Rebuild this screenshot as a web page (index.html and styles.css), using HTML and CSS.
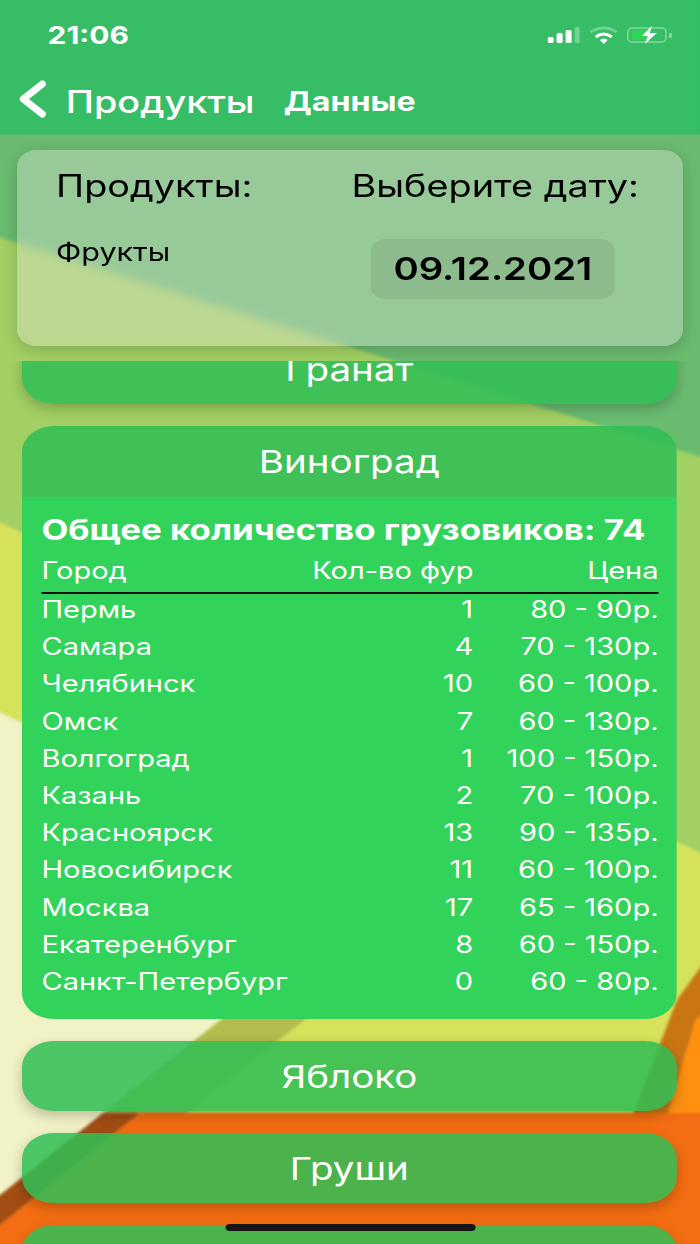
FILE: index.html
```html
<!DOCTYPE html>
<html lang="ru">
<head>
  <meta charset="UTF-8">
  <title>Данные</title>
  <link rel="stylesheet" href="styles.css">
</head>
<body>
  <svg class="wallpaper" viewBox="0 0 700 1244" width="700" height="1244" aria-hidden="true">
    <g class="wallpaper-shapes">
      <rect x="-20" y="-20" width="740" height="1290" fill="#6abb70"/>
      <polygon points="-20,231 720,463 720,1270 -20,1270" fill="#a2d064"/>
      <polygon points="-20,513 720,862 720,1270 -20,1270" fill="#d6e25a"/>
      <polygon points="-20,703 385,893 -20,1211" fill="#f1f2c6"/>
      <polygon points="296,960 380,960 187,1113 103,1113" fill="#b3bc4c"/>
      <polygon points="103,1113 140,1113 -20,1241 -20,1211" fill="#a34d14"/>
      <polygon points="140,1113 720,1113 720,1270 -20,1270 -20,1241" fill="#f36d12"/>
      <polygon points="720,948 720,975 690,985" fill="#a9bb62"/>
      <polygon points="720,940 720,1113 633,1113 677,1000" fill="#c87514"/>
      <polygon points="720,1000 720,1113 668,1113 695,1020" fill="#ff9010"/>
    </g>
  </svg>

  <div class="page">
    <header class="topbar">
      <div class="status">
        <span class="time">21:06</span>
        <svg class="status-icons" viewBox="0 0 124 18" preserveAspectRatio="none">
          <rect x="0" y="11" width="6" height="6" rx="1.5" fill="#fff"/>
          <rect x="9" y="7" width="6" height="10" rx="1.5" fill="#fff"/>
          <rect x="18" y="4" width="6" height="13" rx="1.5" fill="#fff"/>
          <rect x="27" y="1" width="5" height="16" rx="1.5" fill="#fff" opacity=".3"/>
          <path d="M43 6Q56-2 69 6" fill="none" stroke="#fff" stroke-width="3" opacity=".3"/>
          <path d="M48 11Q56 5 64 11" fill="none" stroke="#fff" stroke-width="3"/>
          <path d="M52 14Q56 11 60 14L56 18Z" fill="#fff"/>
          <rect x="80" y="2" width="38" height="14" rx="4" fill="none" stroke="#fff" stroke-width="1.5" opacity=".4"/>
          <rect x="84" y="4" width="17" height="10" rx="1.5" fill="#32d35a"/>
          <rect x="121" y="7" width="3" height="5" rx="1" fill="#fff" opacity=".4"/>
          <path d="M104 0L94 10H100L97 18L109 7H102Z" fill="#fff"/>
        </svg>
      </div>
      <nav class="navbar">
        <svg class="back" viewBox="0 0 28 38" preserveAspectRatio="none">
          <path d="M24 4L5 19L24 34" fill="none" stroke="#fff" stroke-width="7" stroke-linecap="round" stroke-linejoin="round"/>
        </svg>
        <span class="back-label">Продукты</span>
        <span class="nav-title">Данные</span>
      </nav>
    </header>

    <section class="filter-area">
      <div class="filter-panel">
        <div class="filter-col">
          <div class="filter-label">Продукты:</div>
          <div class="filter-value">Фрукты</div>
        </div>
        <div class="filter-col filter-col-date">
          <div class="filter-label">Выберите дату:</div>
          <div class="date-pill">09.12.2021</div>
        </div>
      </div>
    </section>

    <main class="list">
      <div class="card card-clipped">Гранат</div>

      <div class="card-open">
        <div class="card-head">Виноград</div>
        <div class="card-body">
          <div class="total">Общее количество грузовиков: 74</div>
          <div class="row row-head"><span>Город</span><span>Кол-во фур</span><span>Цена</span></div>
          <div class="row"><span>Пермь</span><span>1</span><span>80 - 90р.</span></div>
          <div class="row"><span>Самара</span><span>4</span><span>70 - 130р.</span></div>
          <div class="row"><span>Челябинск</span><span>10</span><span>60 - 100р.</span></div>
          <div class="row"><span>Омск</span><span>7</span><span>60 - 130р.</span></div>
          <div class="row"><span>Волгоград</span><span>1</span><span>100 - 150р.</span></div>
          <div class="row"><span>Казань</span><span>2</span><span>70 - 100р.</span></div>
          <div class="row"><span>Красноярск</span><span>13</span><span>90 - 135р.</span></div>
          <div class="row"><span>Новосибирск</span><span>11</span><span>60 - 100р.</span></div>
          <div class="row"><span>Москва</span><span>17</span><span>65 - 160р.</span></div>
          <div class="row"><span>Екатеренбург</span><span>8</span><span>60 - 150р.</span></div>
          <div class="row"><span>Санкт-Петербург</span><span>0</span><span>60 - 80р.</span></div>
        </div>
      </div>

      <div class="card">Яблоко</div>
      <div class="card">Груши</div>
      <div class="card"></div>
    </main>

    <div class="home-indicator"></div>
  </div>
</body>
</html>
```

FILE: styles.css
```css
html, body {
  margin: 0;
  padding: 0;
  height: 100%;
  overflow: hidden;
}

body {
  position: relative;
  font-family: 'Inter', 'Roboto', sans-serif;
  color: #fff;
}

.wallpaper {
  position: absolute;
  left: 0;
  top: 0;
}

.wallpaper-shapes {
  filter: blur(1.5px);
}

/* the whole screen is stretched sideways, as in the capture: 574 * 1.2195 = 700 */
.page {
  position: relative;
  width: 574px;
  height: 1244px;
  display: flex;
  flex-direction: column;
  overflow: hidden;
  transform: scaleX(1.2195);
  transform-origin: 0 0;
}

.topbar {
  height: 135px;
  flex: none;
  box-sizing: border-box;
  background-color: #36bd66;
  border-bottom: 1px solid #4fb96a;
}

.status {
  height: 60px;
  padding: 9px 23px 0 39px;
  box-sizing: border-box;
  display: flex;
  justify-content: space-between;
  align-items: center;
}

.time {
  font-size: 24.5px;
  font-weight: 700;
}

.status-icons {
  width: 102px;
  height: 18px;
}

.navbar {
  height: 74px;
  box-sizing: border-box;
  padding: 8px 0 0 15px;
  display: flex;
  align-items: center;
}

.back {
  width: 23px;
  height: 38px;
  margin: 0 16px 4px 0;
}

.back-label {
  font-size: 31px;
  font-weight: 500;
  margin-right: 24px;
}

.nav-title {
  font-size: 26.4px;
  font-weight: 700;
}

.filter-area {
  height: 226px;
  flex: none;
  box-sizing: border-box;
  padding: 15px 14px 15px;
  overflow: hidden;
}

.filter-panel {
  height: 196px;
  box-sizing: border-box;
  padding: 14px 36px 0 32px;
  display: flex;
  justify-content: space-between;
  background-color: rgba(232,226,226,0.36);
  backdrop-filter: blur(4px);
  border-radius: 16px;
  box-shadow: 0 4px 14px rgba(0,0,0,0.18);
  color: #000;
}

.filter-col {
  display: flex;
  flex-direction: column;
}

.filter-col-date {
  align-items: center;
}

.filter-label {
  font-size: 31px;
  line-height: 44px;
}

.filter-value {
  font-size: 25px;
  margin-top: 29px;
}

.date-pill {
  margin: 31px 4px 0 0;
  width: 200px;
  height: 60px;
  display: flex;
  align-items: center;
  justify-content: center;
  font-size: 31.4px;
  font-weight: 600;
  background-color: rgba(0,0,0,0.07);
  border-radius: 12px;
}

.list {
  flex: 1;
  min-height: 0;
  overflow: hidden;
  padding: 0 19px 0 18px;
  display: flex;
  flex-direction: column;
  gap: 22px;
}

.card {
  height: 70px;
  flex: none;
  display: flex;
  align-items: center;
  justify-content: center;
  font-size: 31.6px;
  background-color: rgba(48,190,85,0.86);
  border-radius: 26px;
  box-shadow: 0 5px 12px rgba(0,0,0,0.22);
}

.card-clipped {
  margin-top: -27px;
}

.card-open {
  flex: none;
  border-radius: 26px;
  overflow: hidden;
}

.card-head {
  height: 71px;
  display: flex;
  align-items: center;
  justify-content: center;
  font-size: 31.6px;
  background-color: rgba(48,190,85,0.86);
}

.card-body {
  height: 522px;
  box-sizing: border-box;
  padding: 14px 15px 0 16px;
  background-color: #32d35a;
}

.total {
  font-size: 28.6px;
  font-weight: 700;
  line-height: 38px;
  white-space: nowrap;
}

.row {
  display: grid;
  grid-template-columns: 1fr 132px 152px;
  height: 37.2px;
  align-items: center;
  font-size: 23.8px;
  white-space: nowrap;
}

.row span:nth-child(n+2) {
  text-align: right;
}

.row-head {
  height: 44px;
  margin: -1px 0 -3px;
  border-bottom: 2px solid #111;
}

.home-indicator {
  position: absolute;
  left: 185px;
  top: 1224px;
  width: 205px;
  height: 7px;
  background-color: #161616;
  border-radius: 4px;
}
```
